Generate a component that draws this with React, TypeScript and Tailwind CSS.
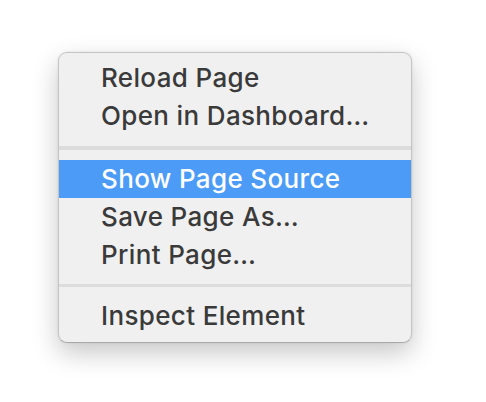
import React from "react";

const Item = ({ label, active }: { label: string; active?: boolean }) => (
  <div
    className={
      "h-[38px] flex items-center pl-[42px] text-[26px] font-medium leading-none tracking-[0.35px] " +
      (active ? "bg-[#4c9bf6] text-white" : "text-[#3a3a3a]")
    }
  >
    {label}
  </div>
);

export default function App() {
  return (
    <div className="w-[486px] h-[402px] bg-white pt-[52px] pl-[58px]" style={{ fontFamily: "Inter, 'Liberation Sans', sans-serif" }}>
      <div className="w-[354px] rounded-[9px] bg-[#f0f0f0] border border-[#c4c4c4] border-b-[#a8a8a8] pt-[6px] pb-[7px] shadow-[0_10px_26px_rgba(0,0,0,0.22),0_0_3px_rgba(0,0,0,0.08)] overflow-hidden">
        <Item label="Reload Page" />
        <Item label="Open in Dashboard…" />
        <div className="mt-[11px] mb-[10px] h-[4px] bg-[#dcdcdc]" />
        <Item label="Show Page Source" active />
        <Item label="Save Page As…" />
        <Item label="Print Page…" />
        <div className="mt-[10px] mb-[10px] h-[3px] bg-[#dcdcdc]" />
        <Item label="Inspect Element" />
      </div>
    </div>
  );
}
